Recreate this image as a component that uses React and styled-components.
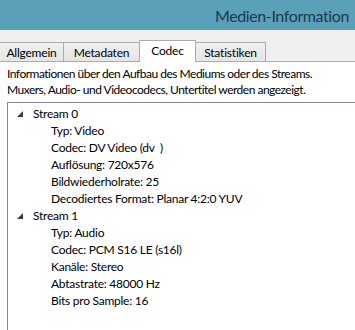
import styled, { createGlobalStyle } from "styled-components";

const GlobalStyle = createGlobalStyle`
  html, body {
    margin: 0;
    padding: 0;
    background: #ffffff;
    overflow: hidden;
  }
  body {
    font-family: Lato, "Noto Sans", sans-serif;
  }
`;

const Window = styled.div`
  width: 355px;
  height: 330px;
  display: flex;
  flex-direction: column;
  background: #ffffff;
  overflow: hidden;
`;

const TitleBar = styled.div`
  height: 30px;
  flex-shrink: 0;
  display: flex;
  align-items: center;
  justify-content: flex-end;
  padding-right: 6px;
  background: #5ba0b9;
  box-sizing: border-box;
`;

const Title = styled.span`
  font-size: 16px;
  letter-spacing: -0.4px;
  color: #1c3a4a;
`;

const TabStrip = styled.div`
  display: flex;
  align-items: flex-end;
  height: 32px;
  flex-shrink: 0;
  padding-top: 9px;
  box-sizing: border-box;
  background: #f0f0f0;
  border-bottom: 1px solid #acacac;
`;

const Tab = styled.div`
  height: ${(p) => (p.$active ? "22px" : "19px")};
  width: ${(p) => p.$w}px;
  display: flex;
  align-items: center;
  justify-content: center;
  box-sizing: border-box;
  font-size: 12px;
  letter-spacing: -0.2px;
  color: #000;
  border: 1px solid #acacac;
  border-bottom: none;
  margin-left: -1px;
  background: ${(p) =>
    p.$active ? "#ffffff" : "linear-gradient(#f0f0f0, #e5e5e5)"};
  margin-bottom: ${(p) => (p.$active ? "-1px" : "0")};
  padding-bottom: ${(p) => (p.$active ? "2px" : "0")};
  position: relative;
  z-index: ${(p) => (p.$active ? 1 : 0)};
`;

const Panel = styled.div`
  flex: 1;
  display: flex;
  flex-direction: column;
  padding: 4px 0 0 7px;
  background: #ffffff;
`;

const Description = styled.p`
  margin: 0;
  font-size: 12px;
  letter-spacing: -0.5px;
  line-height: 16px;
  color: #000;
`;

const TreeList = styled.div`
  margin-top: 4px;
  flex: 1;
  border: 1px solid #828790;
  border-right: none;
  border-bottom: none;
  padding-top: 2px;
`;

const Row = styled.div`
  height: 17px;
  display: flex;
  align-items: center;
  padding-left: ${(p) => p.$indent}px;
  font-size: 12px;
  letter-spacing: -0.25px;
  color: #000;
  white-space: nowrap;
`;

const Expander = styled.svg`
  width: 6px;
  height: 6px;
  margin-right: 10px;
  flex-shrink: 0;
`;

const streams = [
  {
    name: "Stream 0",
    items: [
      "Typ: Video",
      "Codec: DV Video (dv\u00a0\u00a0)",
      "Auflösung: 720x576",
      "Bildwiederholrate: 25",
      "Decodiertes Format: Planar 4:2:0 YUV",
    ],
  },
  {
    name: "Stream 1",
    items: [
      "Typ: Audio",
      "Codec: PCM S16 LE (s16l)",
      "Kanäle: Stereo",
      "Abtastrate: 48000 Hz",
      "Bits pro Sample: 16",
    ],
  },
];

const tabs = [
  { label: "Allgemein", w: 65 },
  { label: "Metadaten", w: 77 },
  { label: "Codec", w: 57, active: true },
  { label: "Statistiken", w: 71 },
];

const App = () => {
  return (
    <>
      <GlobalStyle />
      <Window>
        <TitleBar>
          <Title>Medien-Information</Title>
        </TitleBar>
        <TabStrip>
          {tabs.map((t) => (
            <Tab key={t.label} $w={t.w} $active={t.active}>
              {t.label}
            </Tab>
          ))}
        </TabStrip>
        <Panel>
          <Description>
            Informationen über den Aufbau des Mediums oder des Streams.
            <br />
            Muxers, Audio- und Videocodecs, Untertitel werden angezeigt.
          </Description>
          <TreeList>
            {streams.map((s) => (
              <div key={s.name}>
                <Row $indent={9}>
                  <Expander viewBox="0 0 6 6">
                    <polygon points="6,0 6,6 0,6" fill="#3c3c3c" />
                  </Expander>
                  {s.name}
                </Row>
                {s.items.map((item) => (
                  <Row key={item} $indent={43}>
                    {item}
                  </Row>
                ))}
              </div>
            ))}
          </TreeList>
        </Panel>
      </Window>
    </>
  );
};

export default App;
